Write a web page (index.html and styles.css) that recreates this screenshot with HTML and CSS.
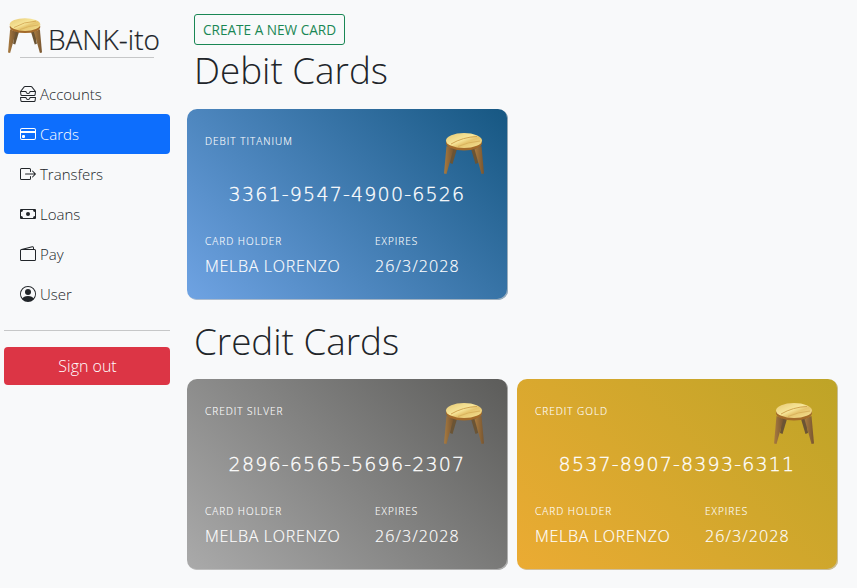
FILE: index.html
```html
<!DOCTYPE html>
<html lang="en">
<head>
    <meta charset="UTF-8">
    <meta name="viewport" content="width=device-width, initial-scale=1.0">
    <title>BANK-ito</title>
    <link rel="stylesheet" href="styles.css">
</head>
<body>
    <svg class="defs" width="0" height="0">
        <defs>
            <linearGradient id="woodTop" x1="0" y1="0" x2="1" y2="1">
                <stop offset="0" stop-color="#e6c873"/>
                <stop offset="0.45" stop-color="#f7e69a"/>
                <stop offset="0.6" stop-color="#e6c56e"/>
                <stop offset="1" stop-color="#f5e395"/>
            </linearGradient>
            <linearGradient id="woodLeg" x1="0" y1="0" x2="1" y2="0">
                <stop offset="0" stop-color="#a97b40"/>
                <stop offset="1" stop-color="#775530"/>
            </linearGradient>
            <symbol id="stool" viewBox="0 0 40 42">
                <path d="M8 15 L6 30 L8.5 31 L13 16 Z" fill="#6b5434"/>
                <path d="M32 15 L34 30 L31.5 31 L27 16 Z" fill="#6b5434"/>
                <path d="M2.5 13 L0 40.5 L2.5 41 L9.5 16 Z" fill="url(#woodLeg)"/>
                <path d="M37.5 13 L40 40.5 L37.5 41 L30.5 16 Z" fill="url(#woodLeg)"/>
                <ellipse cx="20" cy="10" rx="18" ry="7.5" fill="#a36a2a"/>
                <ellipse cx="20" cy="7.5" rx="18" ry="7.5" fill="url(#woodTop)"/>
                <path d="M7 11 Q19 4 33 3.5" stroke="#d2a551" stroke-width="1" fill="none"/>
                <path d="M14 13.5 Q24 9 36 8" stroke="#d9b25c" stroke-width="1" fill="none"/>
            </symbol>
        </defs>
    </svg>

    <div class="layout">
        <nav class="sidebar">
            <div class="brand">
                <svg class="brand-logo"><use href="#stool"/></svg>
                <span class="brand-name">BANK-ito</span>
            </div>
            <ul class="nav-list">
                <li><a class="nav-link" href="#">
                    <svg class="nav-icon" viewBox="0 0 16 16" fill="currentColor"><path d="M4.98 1a.5.5 0 0 0-.39.188L1.54 5H6a.5.5 0 0 1 .5.5 1.5 1.5 0 0 0 3 0A.5.5 0 0 1 10 5h4.46l-3.05-3.812A.5.5 0 0 0 11.02 1H4.98zm9.954 5H10.45a2.5 2.5 0 0 1-4.9 0H1.066l.32 2.562A.5.5 0 0 0 1.884 9h12.234a.5.5 0 0 0 .496-.438L14.933 6zM3.809.563A1.5 1.5 0 0 1 4.981 0h6.038a1.5 1.5 0 0 1 1.172.563l3.7 4.625a.5.5 0 0 1 .105.374l-.39 3.124A1.5 1.5 0 0 1 14.117 10H1.883A1.5 1.5 0 0 1 .394 8.686l-.39-3.124a.5.5 0 0 1 .106-.374L3.81.563zM.125 11.17A.5.5 0 0 1 .5 11H6a.5.5 0 0 1 .5.5 1.5 1.5 0 0 0 3 0 .5.5 0 0 1 .5-.5h5.5a.5.5 0 0 1 .496.562l-.39 3.124A1.5 1.5 0 0 1 14.117 16H1.883a1.5 1.5 0 0 1-1.489-1.314l-.39-3.124a.5.5 0 0 1 .121-.393zm.941.83.32 2.562a.5.5 0 0 0 .497.438h12.234a.5.5 0 0 0 .496-.438l.32-2.562H10.45a2.5 2.5 0 0 1-4.9 0H1.066z"/></svg>
                    Accounts</a></li>
                <li><a class="nav-link active" href="#">
                    <svg class="nav-icon" viewBox="0 0 16 16" fill="currentColor"><path d="M0 4a2 2 0 0 1 2-2h12a2 2 0 0 1 2 2v8a2 2 0 0 1-2 2H2a2 2 0 0 1-2-2V4zm2-1a1 1 0 0 0-1 1v1h14V4a1 1 0 0 0-1-1H2zm13 4H1v5a1 1 0 0 0 1 1h12a1 1 0 0 0 1-1V7z"/><path d="M2 10a1 1 0 0 1 1-1h1a1 1 0 0 1 1 1v1a1 1 0 0 1-1 1H3a1 1 0 0 1-1-1v-1z"/></svg>
                    Cards</a></li>
                <li><a class="nav-link" href="#">
                    <svg class="nav-icon" viewBox="0 0 16 16" fill="currentColor"><path d="M10 12.5a.5.5 0 0 1-.5.5h-8a.5.5 0 0 1-.5-.5v-9a.5.5 0 0 1 .5-.5h8a.5.5 0 0 1 .5.5v2a.5.5 0 0 0 1 0v-2A1.5 1.5 0 0 0 9.5 2h-8A1.5 1.5 0 0 0 0 3.5v9A1.5 1.5 0 0 0 1.5 14h8a1.5 1.5 0 0 0 1.5-1.5v-2a.5.5 0 0 0-1 0v2z"/><path d="M15.854 8.354a.5.5 0 0 0 0-.708l-3-3a.5.5 0 0 0-.708.708L14.293 7.5H5.5a.5.5 0 0 0 0 1h8.793l-2.147 2.146a.5.5 0 0 0 .708.708l3-3z"/></svg>
                    Transfers</a></li>
                <li><a class="nav-link" href="#">
                    <svg class="nav-icon" viewBox="0 0 16 16" fill="currentColor"><path d="M8 10a2 2 0 1 0 0-4 2 2 0 0 0 0 4z"/><path d="M0 4a1 1 0 0 1 1-1h14a1 1 0 0 1 1 1v8a1 1 0 0 1-1 1H1a1 1 0 0 1-1-1V4zm3 0a2 2 0 0 1-2 2v4a2 2 0 0 1 2 2h10a2 2 0 0 1 2-2V6a2 2 0 0 1-2-2H3z"/></svg>
                    Loans</a></li>
                <li><a class="nav-link" href="#">
                    <svg class="nav-icon" viewBox="0 0 16 16" fill="currentColor"><path d="M12.136.326A1.5 1.5 0 0 1 14 1.78V3h.5A1.5 1.5 0 0 1 16 4.5v9a1.5 1.5 0 0 1-1.5 1.5h-13A1.5 1.5 0 0 1 0 13.5v-9a1.5 1.5 0 0 1 1.432-1.499L12.136.326zM5.562 3H13V1.78a.5.5 0 0 0-.621-.484L5.562 3zM1.5 4a.5.5 0 0 0-.5.5v9a.5.5 0 0 0 .5.5h13a.5.5 0 0 0 .5-.5v-9a.5.5 0 0 0-.5-.5h-13z"/></svg>
                    Pay</a></li>
                <li><a class="nav-link" href="#">
                    <svg class="nav-icon" viewBox="0 0 16 16" fill="currentColor"><path d="M11 6a3 3 0 1 1-6 0 3 3 0 0 1 6 0z"/><path fill-rule="evenodd" d="M0 8a8 8 0 1 1 16 0A8 8 0 0 1 0 8zm8-7a7 7 0 0 0-5.468 11.37C3.242 11.226 4.805 10 8 10s4.757 1.225 5.468 2.37A7 7 0 0 0 8 1z"/></svg>
                    User</a></li>
            </ul>
            <hr class="nav-rule">
            <button class="signout" type="button">Sign out</button>
        </nav>

        <main class="content">
            <button class="new-card" type="button">CREATE A NEW CARD</button>
            <h1 class="section-title title-debit">Debit Cards</h1>
            <div class="card-row">
                <div class="card card-titanium">
                    <div class="card-top">
                        <span class="card-label">DEBIT TITANIUM</span>
                        <svg class="card-logo"><use href="#stool"/></svg>
                    </div>
                    <div class="card-number">3361-9547-4900-6526</div>
                    <div class="card-bottom">
                        <div class="holder">
                            <div class="card-label">CARD HOLDER</div>
                            <div class="card-value">MELBA LORENZO</div>
                        </div>
                        <div>
                            <div class="card-label">EXPIRES</div>
                            <div class="card-value card-date">26/3/2028</div>
                        </div>
                    </div>
                </div>
            </div>

            <h1 class="section-title title-credit">Credit Cards</h1>
            <div class="card-row">
                <div class="card card-silver">
                    <div class="card-top">
                        <span class="card-label">CREDIT SILVER</span>
                        <svg class="card-logo"><use href="#stool"/></svg>
                    </div>
                    <div class="card-number">2896-6565-5696-2307</div>
                    <div class="card-bottom">
                        <div class="holder">
                            <div class="card-label">CARD HOLDER</div>
                            <div class="card-value">MELBA LORENZO</div>
                        </div>
                        <div>
                            <div class="card-label">EXPIRES</div>
                            <div class="card-value card-date">26/3/2028</div>
                        </div>
                    </div>
                </div>
                <div class="card card-gold">
                    <div class="card-top">
                        <span class="card-label">CREDIT GOLD</span>
                        <svg class="card-logo"><use href="#stool"/></svg>
                    </div>
                    <div class="card-number">8537-8907-8393-6311</div>
                    <div class="card-bottom">
                        <div class="holder">
                            <div class="card-label">CARD HOLDER</div>
                            <div class="card-value">MELBA LORENZO</div>
                        </div>
                        <div>
                            <div class="card-label">EXPIRES</div>
                            <div class="card-value card-date">26/3/2028</div>
                        </div>
                    </div>
                </div>
            </div>
        </main>
    </div>
</body>
</html>
```

FILE: styles.css
```css
* {
    box-sizing: border-box;
}
body {
    margin: 0;
    background-color: #f8f9fa;
    color: #212529;
    font-family: "Open Sans", sans-serif;
    font-size: 15px;
    font-weight: 300;
    overflow: hidden;
}
.defs {
    position: absolute;
}
.layout {
    display: flex;
    height: 588px;
}
.sidebar {
    width: 166px;
    margin-left: 4px;
    flex-shrink: 0;
}
.brand {
    display: flex;
    align-items: flex-end;
    height: 58px;
    padding-left: 4px;
    position: relative;
}
.brand::after {
    content: "";
    position: absolute;
    left: 16px;
    right: 16px;
    bottom: 0;
    border-bottom: 1px solid #c6c7c8;
}
.brand-logo {
    width: 34px;
    height: 36px;
    margin-bottom: 4px;
}
.brand-name {
    font-size: 28px;
    font-weight: 300;
    line-height: 34px;
    margin-left: 6px;
    margin-bottom: 2px;
    -webkit-text-stroke: 0.2px #212529;
}
.nav-list {
    list-style: none;
    margin: 16px 0 0;
    padding: 0;
}
.nav-link {
    display: flex;
    align-items: center;
    height: 40px;
    padding-left: 16px;
    gap: 4px;
    color: #212529;
    text-decoration: none;
    border-radius: 4px;
}
.nav-link.active {
    background-color: #0d6efd;
    color: #fff;
}
.nav-icon {
    width: 16px;
    height: 16px;
    flex-shrink: 0;
}
.nav-rule {
    margin: 16px 0;
    border: 0;
    border-top: 1px solid #c6c7c8;
}
.signout {
    display: block;
    width: 100%;
    height: 38px;
    padding: 0 0 0 1px;
    background-color: #dc3545;
    color: #fff;
    border: none;
    border-radius: 4px;
    font-family: inherit;
    font-size: 16px;
    font-weight: 300;
}
.content {
    margin-left: 17px;
    flex-grow: 1;
}
.new-card {
    display: block;
    margin: 14px 0 0 7px;
    height: 31px;
    width: 151px;
    padding: 0;
    background: transparent;
    border: 1px solid #198754;
    border-radius: 3px;
    color: #198754;
    font-family: inherit;
    font-size: 13.6px;
    font-weight: 400;
}
.section-title {
    margin: 0;
    font-size: 36.8px;
    font-weight: 300;
    line-height: 50px;
}
.title-debit {
    margin-left: 7px;
    margin-top: 0;
    margin-bottom: 14px;
}
.title-credit {
    margin-left: 7px;
    margin-top: 16px;
    margin-bottom: 13px;
}
.card-row {
    display: flex;
    gap: 9px;
}
.card {
    width: 321px;
    height: 191px;
    padding: 24px 18px 0;
    border-radius: 10px;
    color: #fff;
    box-shadow: inset -1px -1px 0 rgba(200, 200, 200, 0.7);
}
.card-titanium {
    background: linear-gradient(45deg, #6fa3e3, #165782);
}
.card-silver {
    background: linear-gradient(45deg, #aaaaaa, #5c5c5a);
}
.card-gold {
    background: linear-gradient(45deg, #ebab33, #bea427);
}
.card-top {
    display: flex;
    justify-content: space-between;
    align-items: flex-start;
    height: 42px;
}
.card-logo {
    width: 40px;
    height: 42px;
    margin-right: 6px;
}
.card-label {
    font-size: 10px;
    font-weight: 300;
    letter-spacing: 1px;
    line-height: 16px;
    -webkit-text-stroke: 0.1px #fff;
}
.card-number {
    margin-top: 8px;
    margin-right: 1px;
    text-align: center;
    font-family: "DejaVu Sans", sans-serif;
    font-size: 19px;
    letter-spacing: 1.2px;
    font-weight: 200;
    -webkit-text-stroke: 0.3px #fff;
}
.card-bottom {
    display: flex;
    margin-top: 28px;
}
.holder {
    width: 170px;
}
.card-value {
    margin-top: 6px;
    font-size: 16px;
    font-weight: 300;
    letter-spacing: 0.7px;
    -webkit-text-stroke: 0.15px #fff;
}
.card-date {
    letter-spacing: 1.1px;
}
```
